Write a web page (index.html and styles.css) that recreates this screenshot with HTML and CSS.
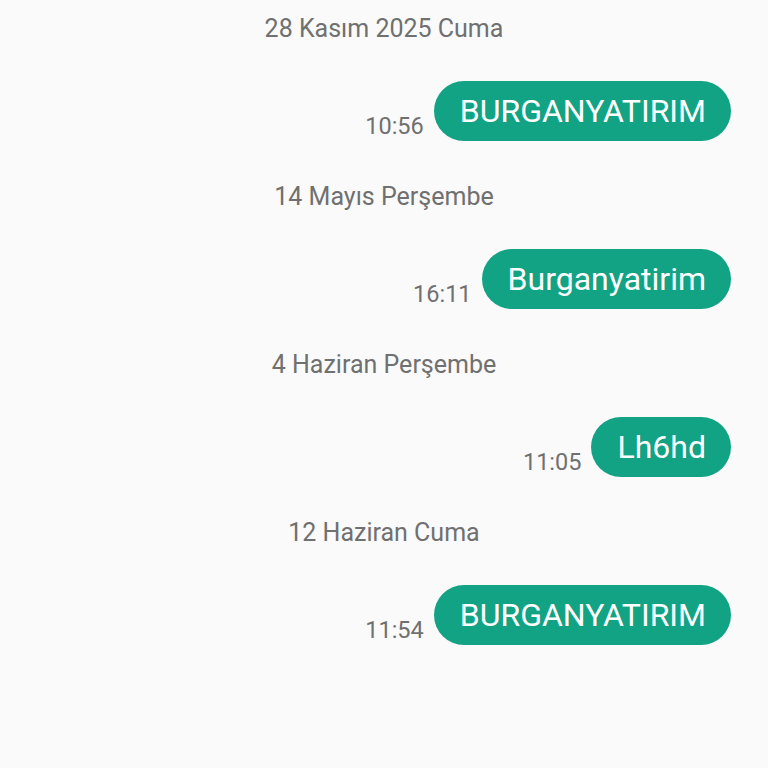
FILE: index.html
```html
<!DOCTYPE html>
<html lang="tr">
<head>
    <meta charset="UTF-8">
    <meta name="viewport" content="width=device-width, initial-scale=1.0">
    <title>Mesajlar</title>
    <link rel="stylesheet" href="styles.css">
</head>
<body>
    <div class="thread">
        <div class="day">
            <div class="date">28 Kasım 2025 Cuma</div>
            <div class="message">
                <span class="time">10:56</span>
                <span class="bubble">BURGANYATIRIM</span>
            </div>
        </div>
        <div class="day">
            <div class="date">14 Mayıs Perşembe</div>
            <div class="message">
                <span class="time">16:11</span>
                <span class="bubble">Burganyatirim</span>
            </div>
        </div>
        <div class="day">
            <div class="date">4 Haziran Perşembe</div>
            <div class="message">
                <span class="time">11:05</span>
                <span class="bubble">Lh6hd</span>
            </div>
        </div>
        <div class="day">
            <div class="date">12 Haziran Cuma</div>
            <div class="message">
                <span class="time">11:54</span>
                <span class="bubble">BURGANYATIRIM</span>
            </div>
        </div>
    </div>
</body>
</html>
```

FILE: styles.css
```css
body {
    margin: 0;
    background-color: #fafafa;
    font-family: Roboto, "Noto Sans", sans-serif;
}

.thread {
    padding: 12px 37px 0 37px;
}

.day {
    margin-bottom: 39px;
}

.date {
    height: 30px;
    line-height: 34px;
    text-align: center;
    font-size: 25px;
    color: #707070;
    margin-bottom: 39px;
}

.message {
    display: flex;
    justify-content: flex-end;
    align-items: flex-end;
    gap: 10px;
}

.time {
    font-size: 23.5px;
    line-height: 26px;
    margin-bottom: 2px;
    color: #707070;
}

.bubble {
    height: 60px;
    line-height: 60px;
    padding: 0 25px 0 26px;
    border-radius: 30px;
    background-color: #12a385;
    color: #fff;
    font-size: 32px;
}
```
